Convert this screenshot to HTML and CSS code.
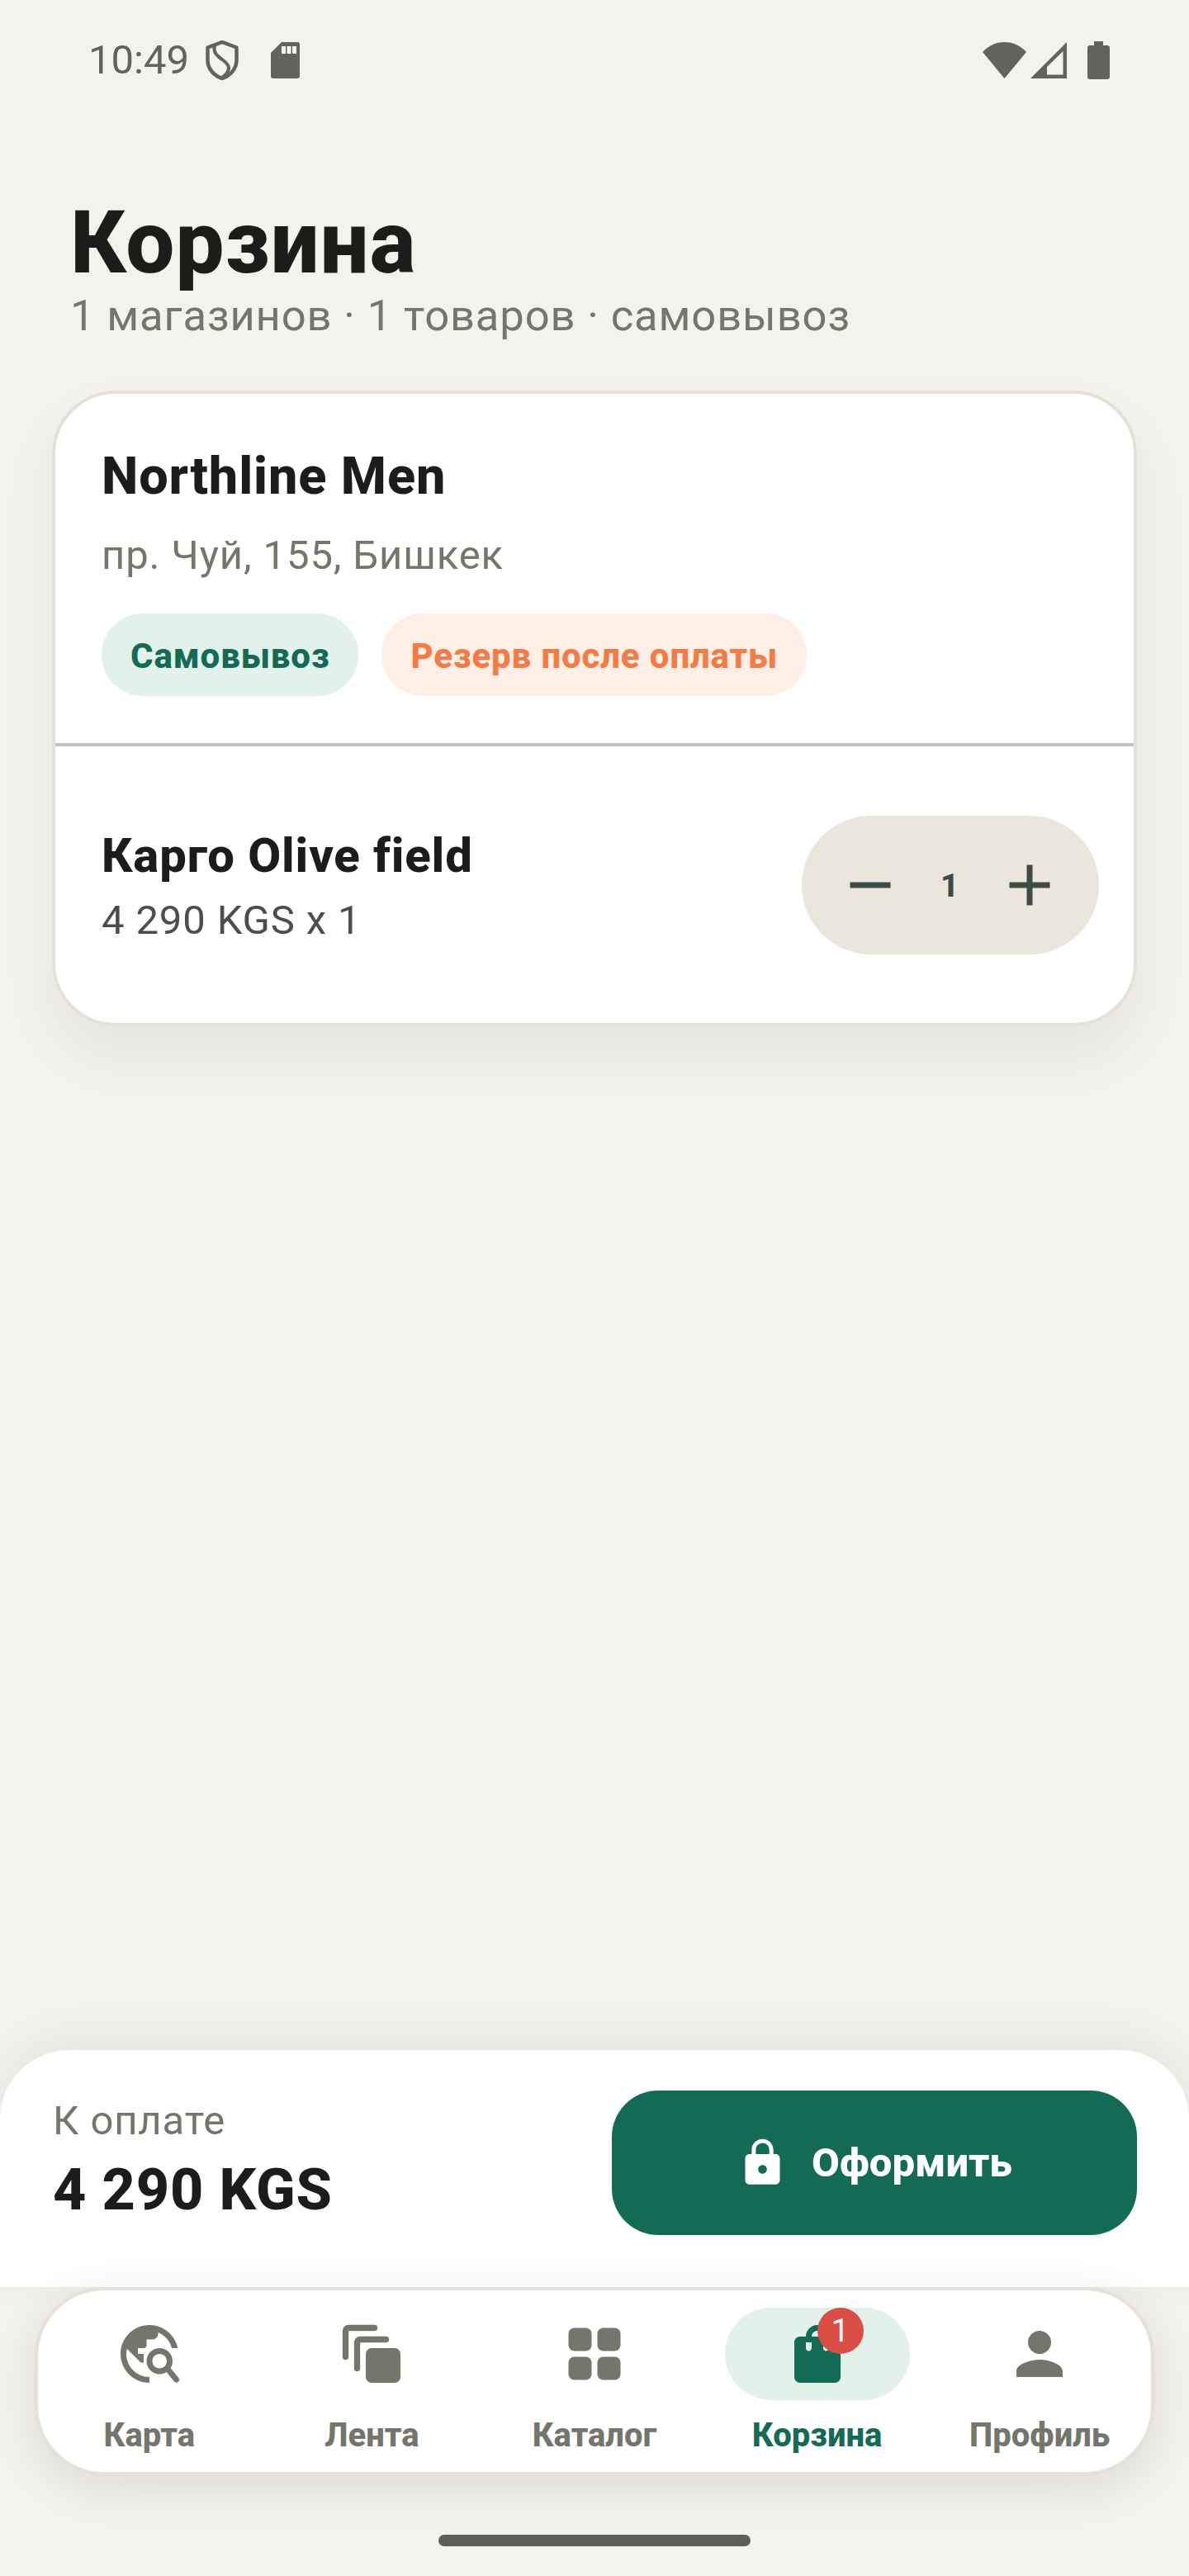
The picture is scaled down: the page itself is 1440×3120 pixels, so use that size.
FILE: index.html
```html
<!DOCTYPE html>
<html lang="ru">
<head>
  <meta charset="UTF-8">
  <meta name="viewport" content="width=device-width, initial-scale=1.0">
  <title>Корзина</title>
  <link rel="stylesheet" href="styles.css">
</head>
<body>

  <div class="status">
    <div class="status-left">
      <span class="time">10:49</span>
      <svg class="ic-shield" viewBox="0 0 40 48"><path class="line" d="M20 2 L37.500 8.500 V24 C37.500 35 29 43 20 46 C11 43 2.500 35 2.500 24 V8.500 Z"/><path class="line thin" d="M11 6 C9 14 13 18 20 23 C28 29 30 33 26 39 C24 42 21 44 18 46"/></svg>
      <svg class="ic-sd" viewBox="0 0 35 44"><path fill-rule="evenodd" d="M13 0H32a3 3 0 0 1 3 3V41a3 3 0 0 1-3 3H3a3 3 0 0 1-3-3V13ZM13 5v9h5V5ZM19.500 5v9h5V5ZM26 5v9h5V5Z"/></svg>
    </div>
    <div class="status-right">
      <svg class="ic-wifi" viewBox="0 0 53 44"><path d="M26.500 44 L0 12 C7 4.500 16 0 26.500 0 S46 4.500 53 12 Z"/></svg>
      <svg class="ic-signal" viewBox="0 0 44 44"><path fill-rule="evenodd" d="M44 0V44H0ZM39.500 11 20 30V39.500H39.500Z"/></svg>
      <svg class="ic-battery" viewBox="0 0 27 46"><path d="M8 0H19V5H24a3 3 0 0 1 3 3V43a3 3 0 0 1-3 3H3a3 3 0 0 1-3-3V8a3 3 0 0 1 3-3H8Z"/></svg>
    </div>
  </div>

  <header class="head">
    <h1>Корзина</h1>
    <p>1 магазинов · 1 товаров · самовывоз</p>
  </header>

  <section class="card">
    <div class="shop">
      <h2>Northline Men</h2>
      <p class="address">пр. Чуй, 155, Бишкек</p>
      <div class="chips">
        <span class="chip chip-green">Самовывоз</span>
        <span class="chip chip-orange">Резерв после оплаты</span>
      </div>
    </div>
    <div class="item">
      <div class="item-text">
        <div class="item-name">Карго Olive field</div>
        <div class="item-price">4 290 KGS x 1</div>
      </div>
      <div class="stepper">
        <svg class="icon" viewBox="0 0 24 24"><path d="M19 13H5v-2h14v2z"/></svg>
        <span class="qty">1</span>
        <svg class="icon" viewBox="0 0 24 24"><path d="M19 13h-6v6h-2v-6H5v-2h6V5h2v6h6v2z"/></svg>
      </div>
    </div>
  </section>

  <div class="spacer"></div>

  <section class="checkout">
    <div class="pay-info">
      <div class="pay-label">К оплате</div>
      <div class="pay-total">4 290 KGS</div>
    </div>
    <button type="button" class="pay-btn">
      <svg viewBox="0 0 24 24"><path d="M18 8h-1V6c0-2.760-2.240-5-5-5S7 3.240 7 6v2H6c-1.100 0-2 .9-2 2v10c0 1.100.9 2 2 2h12c1.100 0 2-.9 2-2V10c0-1.100-.9-2-2-2zm-6 9c-1.100 0-2-.9-2-2s.9-2 2-2 2 .9 2 2-.9 2-2 2zm3.100-9H8.900V6c0-1.710 1.390-3.100 3.100-3.100 1.710 0 3.100 1.390 3.100 3.100v2z"/></svg>
      Оформить
    </button>
  </section>

  <nav class="nav">
    <div class="nav-item">
      <div class="nav-icon">
        <svg class="icon" viewBox="0 0 24 24"><path fill-rule="evenodd" d="M15.500 10C13 10 11 12 11 14.500S13 19 15.500 19 20 17 20 14.500 18 10 15.500 10zm0 7c-1.400 0-2.500-1.100-2.500-2.500s1.100-2.500 2.500-2.500 2.500 1.100 2.500 2.500-1.100 2.500-2.500 2.500z"/><path d="M12 20v2C6.480 22 2 17.520 2 12S6.480 2 12 2c4.840 0 8.870 3.440 9.800 8h-2.070c-.64-2.460-2.400-4.470-4.730-5.410V5c0 1.100-.9 2-2 2h-2v2c0 .55-.45 1-1 1H8v2h2v3H9l-4.790-4.790C4.080 10.790 4 11.380 4 12c0 4.410 3.590 8 8 8z"/><path class="handle" d="M18.600 17.600 21.300 20.900"/></svg>
      </div>
      <span>Карта</span>
    </div>
    <div class="nav-item">
      <div class="nav-icon">
        <svg class="icon" viewBox="0 0 24 24"><path class="handle wide" d="M3 13V4a1 1 0 0 1 1-1h9"/><path class="handle wide" d="M7 17V8a1 1 0 0 1 1-1h9"/><rect x="10" y="10" width="12" height="12" rx="2"/></svg>
      </div>
      <span>Лента</span>
    </div>
    <div class="nav-item">
      <div class="nav-icon">
        <svg class="icon" viewBox="0 0 24 24"><rect x="3" y="3" width="8" height="8" rx="2"/><rect x="13" y="3" width="8" height="8" rx="2"/><rect x="3" y="13" width="8" height="8" rx="2"/><rect x="13" y="13" width="8" height="8" rx="2"/></svg>
      </div>
      <span>Каталог</span>
    </div>
    <div class="nav-item active">
      <div class="nav-icon">
        <svg class="icon" viewBox="0 0 24 24"><path d="M18 6h-2c0-2.210-1.790-4-4-4S8 3.790 8 6H6c-1.100 0-2 .9-2 2v12c0 1.100.9 2 2 2h12c1.100 0 2-.9 2-2V8c0-1.100-.9-2-2-2zm-8 4c0 .55-.45 1-1 1s-1-.45-1-1V8h2v2zm2-6c1.100 0 2 .9 2 2h-4c0-1.100.9-2 2-2zm4 6c0 .55-.45 1-1 1s-1-.45-1-1V8h2v2z"/></svg>
        <span class="badge">1</span>
      </div>
      <span>Корзина</span>
    </div>
    <div class="nav-item">
      <div class="nav-icon">
        <svg class="icon" viewBox="0 0 24 24"><path d="M12 12c2.210 0 4-1.790 4-4s-1.790-4-4-4-4 1.790-4 4 1.790 4 4 4zm0 2c-2.670 0-8 1.340-8 4v2h16v-2c0-2.660-5.330-4-8-4z"/></svg>
      </div>
      <span>Профиль</span>
    </div>
  </nav>

  <div class="home-bar"></div>

</body>
</html>
```

FILE: styles.css
```css
* {
  box-sizing: border-box;
}

body {
  margin: 0;
  width: 1440px;
  height: 3120px;
  display: flex;
  flex-direction: column;
  overflow: hidden;
  font-family: 'Roboto', sans-serif;
  letter-spacing: 0.875px;
  background-color: #f3f2ed;
  color: #1a1d1a;
}

h1, h2, p {
  margin: 0;
}

svg {
  display: block;
  flex: none;
}

/* status bar */
.status {
  height: 146px;
  padding: 49px 60px 0 107px;
  display: flex;
  justify-content: space-between;
  align-items: flex-start;
  fill: #63625c;
}

.status-left, .status-right {
  display: flex;
  align-items: center;
  height: 48px;
}

.time {
  font-size: 49px;
  line-height: 48px;
  letter-spacing: 0;
  color: #63625c;
  width: 142px;
}

.ic-shield {
  width: 40px;
  height: 48px;
}

.line {
  fill: none;
  stroke: #63625c;
  stroke-width: 4.500;
  stroke-linejoin: round;
}

.line.thin {
  stroke-width: 4;
}

.ic-sd {
  width: 35px;
  height: 44px;
  margin-left: 39px;
}

.ic-wifi {
  width: 53px;
  height: 44px;
}

.ic-signal {
  width: 44px;
  height: 44px;
  margin-left: 5px;
}

.ic-battery {
  width: 27px;
  height: 46px;
  margin-left: 25px;
  margin-right: 36px;
}

/* heading */
.head {
  padding: 96px 85px 0;
}

.head h1 {
  font-size: 105px;
  line-height: 105px;
  font-weight: 800;
}

.head p {
  margin-top: 4px;
  font-size: 52.500px;
  line-height: 63px;
  color: #74766c;
}

/* store card */
.card {
  margin: 59px 63px 0;
  background-color: #fff;
  border: 4px solid #e6e1d8;
  border-radius: 77px;
  box-shadow: 0 35px 70px rgba(0, 0, 0, 0.06);
}

.shop {
  padding: 58px 56px 57px;
  border-bottom: 4px solid #bcc7c1;
}

.shop h2 {
  font-size: 63px;
  line-height: 84px;
  font-weight: 800;
}

.address {
  margin-top: 19px;
  font-size: 49px;
  line-height: 70px;
  color: #74766c;
}

.chips {
  display: flex;
  gap: 28px;
  margin-top: 35px;
}

.chip {
  height: 100px;
  padding: 0 35px;
  border-radius: 50px;
  font-size: 42px;
  line-height: 103px;
  font-weight: 800;
}

.chip-green {
  background-color: #e2f1ea;
  color: #136a55;
}

.chip-orange {
  background-color: #fdeee6;
  color: #f47b45;
}

.item {
  display: flex;
  justify-content: space-between;
  align-items: center;
  padding: 84px 42px 83px 56px;
}

.item-text {
  padding-top: 4px;
}

.item-name {
  font-size: 58px;
  line-height: 77px;
  font-weight: 800;
}

.item-price {
  margin-top: 5px;
  font-size: 49px;
  line-height: 70px;
  color: #4a4f4a;
}

.stepper {
  width: 360px;
  height: 168px;
  padding: 0 42px 0 41px;
  display: flex;
  align-items: center;
  border-radius: 84px;
  background-color: #eae6dc;
  fill: #3e4a45;
}

.qty {
  flex: 1;
  text-align: center;
  font-size: 38.500px;
  font-weight: 800;
  color: #3e4a45;
}

.icon {
  width: 84px;
  height: 84px;
}

.spacer {
  flex: 1;
}

/* pay bar */
.checkout {
  height: 287px;
  padding: 49px 63px 0 64px;
  display: flex;
  justify-content: space-between;
  align-items: flex-start;
  background-color: #fff;
  border-radius: 84px 84px 0 0;
  box-shadow: 0 -14px 56px rgba(0, 0, 0, 0.06);
}

.pay-info {
  margin-top: 2px;
}

.pay-label {
  font-size: 49px;
  line-height: 70px;
  color: #74766c;
}

.pay-total {
  margin-top: 3px;
  font-size: 70px;
  line-height: 91px;
  font-weight: 800;
}

.pay-btn {
  width: 636px;
  height: 175px;
  display: flex;
  align-items: center;
  justify-content: center;
  gap: 28px;
  border: none;
  border-radius: 56px;
  background-color: #136a55;
  color: #fff;
  font-family: inherit;
  font-size: 49px;
  letter-spacing: 0;
  font-weight: 800;
  fill: #fff;
}

.pay-btn svg {
  width: 63px;
  height: 63px;
}

/* bottom nav */
.nav {
  margin: 0 42px;
  height: 228px;
  padding-top: 21px;
  display: flex;
  background-color: #fff;
  border: 4px solid #e6e1d8;
  border-radius: 84px;
  box-shadow: 0 14px 56px rgba(0, 0, 0, 0.1);
}

.nav-item {
  flex: 1;
  display: flex;
  flex-direction: column;
  align-items: center;
  font-size: 40px;
  line-height: 56px;
  letter-spacing: 0;
  font-weight: 800;
  color: #74766c;
  fill: #74766c;
  stroke: #74766c;
  stroke-width: 0;
}

.nav-icon {
  position: relative;
  width: 224px;
  height: 112px;
  margin-bottom: 15px;
  display: flex;
  align-items: center;
  justify-content: center;
  border-radius: 56px;
}

.handle {
  fill: none;
  stroke-width: 2;
  stroke-linecap: round;
}

.handle.wide {
  stroke-width: 2.100;
}

.active {
  color: #136a55;
  fill: #136a55;
}

.active .nav-icon {
  background-color: #e2f1ea;
}

.badge {
  position: absolute;
  left: 112px;
  top: 0;
  width: 56px;
  height: 56px;
  border-radius: 50%;
  background-color: #d94f45;
  color: #fff;
  font-size: 38.500px;
  line-height: 56px;
  font-weight: 400;
  text-align: center;
}

.home-bar {
  width: 378px;
  height: 14px;
  margin: 72px auto 36px;
  border-radius: 7px;
  background-color: #5f5f5a;
}
```
